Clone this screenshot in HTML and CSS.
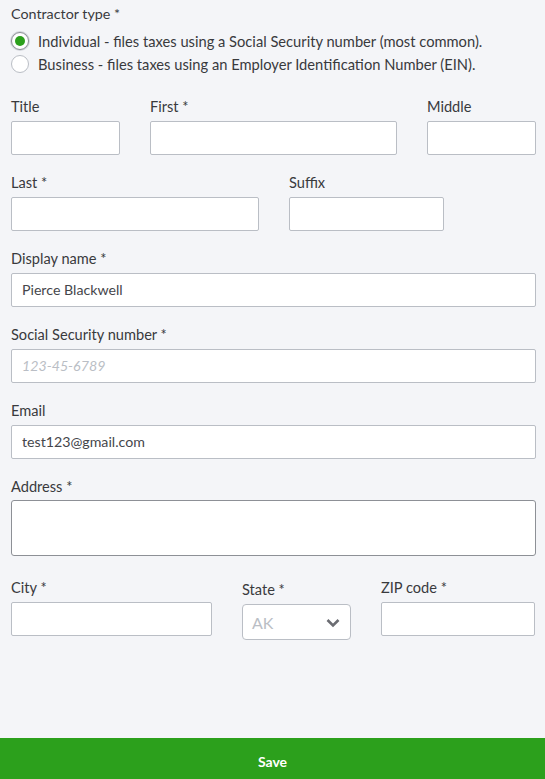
FILE: index.html
```html
<!DOCTYPE html>
<html lang="en">
<head>
<meta charset="utf-8">
<link rel="stylesheet" href="styles.css">
</head>
<body>
<div class="page">
  <form class="form">
    <div class="type-label">Contractor type *</div>
    <div class="radios">
      <label class="radio-row"><span class="radio checked"></span><span class="radio-text">Individual - files taxes using a Social Security number (most common).</span></label>
      <label class="radio-row"><span class="radio"></span><span class="radio-text">Business - files taxes using an Employer Identification Number (EIN).</span></label>
    </div>

    <div class="row">
      <div class="field w-title"><div class="label">Title</div><div class="input"></div></div>
      <div class="field w-first"><div class="label">First *</div><div class="input"></div></div>
      <div class="field w-middle"><div class="label">Middle</div><div class="input"></div></div>
    </div>

    <div class="row">
      <div class="field w-last"><div class="label">Last *</div><div class="input"></div></div>
      <div class="field w-suffix"><div class="label">Suffix</div><div class="input"></div></div>
    </div>

    <div class="field"><div class="label">Display name *</div><div class="input">Pierce Blackwell</div></div>
    <div class="field"><div class="label">Social Security number *</div><div class="input placeholder">123-45-6789</div></div>
    <div class="field"><div class="label">Email</div><div class="input">test123@gmail.com</div></div>
    <div class="field field-address"><div class="label label-address">Address *</div><div class="textarea"></div></div>

    <div class="row row-city">
      <div class="field w-city"><div class="label">City *</div><div class="input"></div></div>
      <div class="field w-state"><div class="label label-state">State *</div>
        <div class="select"><span class="select-val">AK</span>
          <svg class="chev" width="14" height="10" viewBox="0 0 14 10"><path d="M1.5 2 L7 7.5 L12.5 2" fill="none" stroke="#6b6c72" stroke-width="2.6"/></svg>
        </div>
      </div>
      <div class="field w-zip"><div class="label">ZIP code *</div><div class="input"></div></div>
    </div>
  </form>
  <div class="savebar">Save</div>
</div>
</body>
</html>
```

FILE: styles.css
```css
* { box-sizing: border-box; }
html, body { margin: 0; padding: 0; }
body {
  background: #f4f5f8;
  font-family: Lato, "Open Sans", "Liberation Sans", sans-serif;
  color: #393a3d;
}
.page {
  width: 545px;
  height: 779px;
  display: flex;
  flex-direction: column;
}
.form {
  flex: 1;
  padding: 4px 9px 0 11px;
}
.type-label {
  font-size: 14.3px;
  line-height: 20px;
}
.radios {
  margin-top: 8px;
  display: flex;
  flex-direction: column;
  gap: 5px;
  margin-bottom: 24px;
}
.radio-row {
  display: flex;
  align-items: center;
  gap: 9px;
  height: 18px;
}
.radio {
  width: 18px;
  height: 18px;
  border-radius: 50%;
  border: 1px solid #babec5;
  background: #fff;
  flex: none;
  display: flex;
  align-items: center;
  justify-content: center;
}
.radio.checked {
  border: 1px solid #8d9096;
  box-shadow: 0 0 0 1px #d4d7dc;
}
.radio.checked::after {
  content: "";
  width: 10px;
  height: 10px;
  border-radius: 50%;
  background: #2ca01c;
}
.radio-text {
  font-size: 14.7px;
  line-height: 18px;
}
.row {
  display: flex;
  gap: 30px;
}
.field {
  margin-bottom: 18px;
}
.label {
  font-size: 14.6px;
  line-height: 20px;
  margin-bottom: 4px;
}
.label-address { margin-bottom: 3px; }
.input {
  height: 34px;
  background: #fff;
  border: 1px solid #babec5;
  border-radius: 2px;
  font-size: 14.2px;
  line-height: 32px;
  padding-left: 10px;
  color: #45464b;
}
.input.placeholder {
  color: #babec5;
  font-style: italic;
}
.textarea {
  height: 56px;
  background: #fff;
  border: 1px solid #8d9096;
  border-radius: 3px;
}
.field-address { margin-bottom: 22px; }
.w-title { width: 109px; }
.w-first { width: 247px; }
.w-middle { width: 109px; }
.w-last { width: 248px; }
.w-suffix { width: 155px; }
.w-city { width: 201px; }
.w-state { width: 109px; }
.w-zip { width: 154px; }
.label-state { margin-top: 2px; }
.select {
  height: 36px;
  background: #fff;
  border: 1px solid #babec5;
  border-radius: 4px;
  display: flex;
  align-items: center;
  justify-content: space-between;
  padding: 0 10px 0 9px;
}
.select-val {
  font-size: 16px;
  color: #babec5;
}
.chev { display: block; margin-top: 1px; }
.savebar {
  height: 41px;
  background: #2ca01c;
  color: #fff;
  font-weight: 700;
  font-size: 14px;
  display: flex;
  align-items: center;
  justify-content: center;
  padding-top: 6px;
}
```
